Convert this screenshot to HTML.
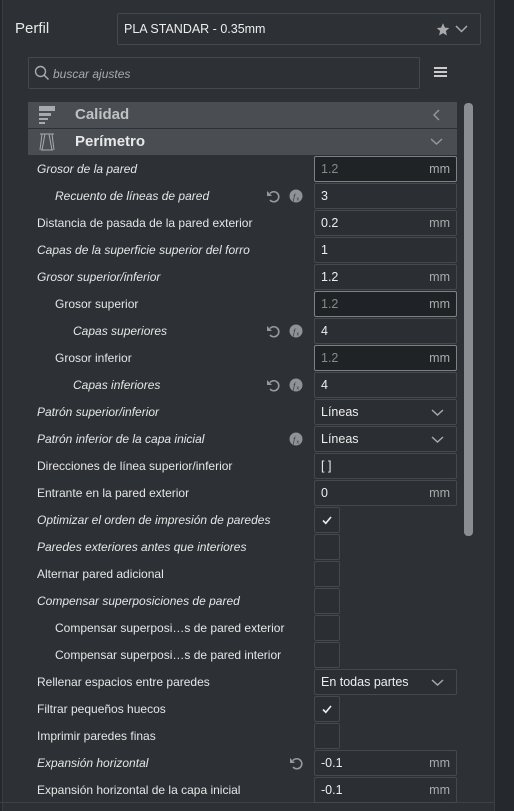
<!DOCTYPE html>
<html><head><meta charset="utf-8"><style>
*{margin:0;padding:0;box-sizing:border-box}
body{width:514px;height:811px;background:#2d3035;font-family:"Liberation Sans",sans-serif;color:#e4e4e4;position:relative;overflow:hidden}
.abs{position:absolute}
.lbl{position:absolute;font-size:12px;line-height:14px;white-space:nowrap;color:#e6e6e6}
.i{font-style:italic}
.f{position:absolute;left:314px;width:143px;height:26px;border:1px solid #45484d;border-radius:2px;background:#2b2e33;font-size:12.5px;line-height:24px;padding-left:6px;color:#eee}
.f.d{background:#202326;border-color:#7d8085;color:#888}
.f .u{position:absolute;right:6px;top:0;color:#aaa}
.cb{position:absolute;left:314px;width:26px;height:26px;border:1px solid #45484d;border-radius:2px;background:#2b2e33}
.ic{position:absolute}
</style></head><body>
<div class="abs" style="left:0;top:0;width:3px;height:811px;background:#25282c;border-right:1px solid #3a3d42"></div>
<div class="abs" style="left:494px;top:0;width:20px;height:811px;background:#25282c;border-left:1px solid #3a3d42"></div>
<div class="abs" style="left:0;top:802px;width:494px;height:1px;background:#3e4146"></div>
<div class="abs" style="left:15px;top:20px;font-size:15px;color:#e8e8e8">Perfil</div>
<div class="abs" style="left:117px;top:13px;width:364px;height:32px;border:1px solid #45484d;border-radius:2px;font-size:12.5px;line-height:30px;padding-left:6px;color:#eee">PLA STANDAR - 0.35mm
<svg class="ic" style="left:317px;top:8px" width="16" height="15" viewBox="0 0 24 24"><path d="M12 2l3 7 7 .6-5.4 4.7 1.7 7.2L12 17.7 5.7 21.5l1.7-7.2L2 9.6 9 9z" fill="#aaa"/></svg>
<svg class="ic" style="left:337px;top:10px" width="13" height="10" viewBox="0 0 13 10"><path d="M1 2l5.5 5.5L12 2" stroke="#aaa" stroke-width="1.5" fill="none"/></svg></div>
<div class="abs" style="left:28px;top:57px;width:392px;height:32px;border:1px solid #45484d;border-radius:2px"></div>
<svg class="abs" style="left:34px;top:65px" width="16" height="16" viewBox="0 0 16 16"><circle cx="6.5" cy="6.5" r="5" stroke="#aaa" stroke-width="1.4" fill="none"/><path d="M10 10l4.5 4.5" stroke="#aaa" stroke-width="1.5"/></svg>
<div class="abs i" style="left:53px;top:67px;font-size:12px;color:#aaa">buscar ajustes</div>
<div class="abs" style="left:434px;top:67px;width:13px;height:2px;background:#ccc;box-shadow:0 4px 0 #ccc,0 8px 0 #ccc"></div>
<div class="abs" style="left:464px;top:103px;width:9px;height:433px;background:#8a8d91;border-radius:4px"></div>
<div class="abs" style="left:28px;top:102px;width:429px;height:26px;background:#4a4e53"></div>
<div class="abs" style="left:28px;top:129px;width:429px;height:26px;background:#4a4e53"></div>
<div class="abs" style="left:39px;top:106px;width:16px;height:5px;background:#a8abae"></div>
<div class="abs" style="left:39px;top:113px;width:12px;height:3px;background:#a8abae"></div>
<div class="abs" style="left:39px;top:118px;width:9px;height:2px;background:#a8abae"></div>
<div class="abs" style="left:39px;top:122px;width:6px;height:2px;background:#a8abae"></div>
<svg class="abs" style="left:38px;top:133px" width="18" height="18" viewBox="0 0 18 18"><path d="M2 1h14M3 17h12M4 1l-2 16M14 1l2 16M7 1l-3 16M11 1l3 16" stroke="#a8abae" stroke-width="1" fill="none"/></svg>
<div class="abs" style="left:75px;top:106px;font-size:15px;font-weight:bold;color:#c0c1c3">Calidad</div>
<div class="abs" style="left:75px;top:133px;font-size:15px;font-weight:bold;color:#e8e8e8">Perímetro</div>
<svg class="abs" style="left:432px;top:109px" width="9" height="12" viewBox="0 0 9 12"><path d="M7 1L2 6l5 5" stroke="#999" stroke-width="1.4" fill="none"/></svg>
<svg class="abs" style="left:430px;top:137px" width="13" height="9" viewBox="0 0 13 9"><path d="M1 2l5.5 5L12 2" stroke="#999" stroke-width="1.4" fill="none"/></svg>

<div id="rows"></div>
<script>
var R=[
["Grosor de la pared",37,1,"fd","1.2"],
["Recuento de líneas de pared",55,1,"f","3","rf"],
["Distancia de pasada de la pared exterior",37,0,"fm","0.2"],
["Capas de la superficie superior del forro",37,1,"f","1"],
["Grosor superior/inferior",37,1,"fm","1.2"],
["Grosor superior",55,0,"fd","1.2"],
["Capas superiores",73,1,"f","4","rf"],
["Grosor inferior",55,0,"fd","1.2"],
["Capas inferiores",73,1,"f","4","rf"],
["Patrón superior/inferior",37,1,"dd","Líneas"],
["Patrón inferior de la capa inicial",37,1,"dd","Líneas","x"],
["Direcciones de línea superior/inferior",37,0,"f","[ ]"],
["Entrante en la pared exterior",37,0,"fm","0"],
["Optimizar el orden de impresión de paredes",37,1,"ck"],
["Paredes exteriores antes que interiores",37,1,"cb"],
["Alternar pared adicional",37,0,"cb"],
["Compensar superposiciones de pared",37,1,"cb"],
["Compensar superposi…s de pared exterior",55,0,"cb"],
["Compensar superposi…s de pared interior",55,0,"cb"],
["Rellenar espacios entre paredes",37,0,"dd","En todas partes"],
["Filtrar pequeños huecos",37,0,"ck"],
["Imprimir paredes finas",37,0,"cb"],
["Expansión horizontal",37,1,"fm","-0.1","r"],
["Expansión horizontal de la capa inicial",37,0,"fm","-0.1"]];
var h="";
var reset='<svg width="14" height="14" viewBox="0 0 14 14"><path d="M4 4.5A5 5 0 1 1 4 11" stroke="#999" stroke-width="1.6" fill="none"/><path d="M1 2v5h5z" fill="#999"/></svg>';
var fx='<svg width="14" height="14" viewBox="0 0 14 14"><circle cx="7" cy="7" r="6.5" fill="#8f9296"/><text x="4" y="10.5" font-size="8" font-style="italic" font-family="Liberation Serif" fill="#2d3035">f</text><text x="7.5" y="11.5" font-size="5" fill="#2d3035" font-family="Liberation Sans">x</text></svg>';
var chk='<svg width="24" height="24" viewBox="0 0 24 24" style="position:absolute;left:0;top:0"><path d="M8 12.5l2.8 2.8L16 9" stroke="#eee" stroke-width="1.6" fill="none"/></svg>';
R.forEach(function(r,k){var c=169+27*k,t=c-13;
h+='<div class="lbl'+(r[2]?' i':'')+'" style="left:'+r[1]+'px;top:'+(c-7)+'px">'+r[0]+'</div>';
var ty=r[3];
if(ty=="fd")h+='<div class="f d" style="top:'+t+'px">'+r[4]+'<span class="u">mm</span></div>';
else if(ty=="fm")h+='<div class="f" style="top:'+t+'px">'+r[4]+'<span class="u">mm</span></div>';
else if(ty=="f")h+='<div class="f" style="top:'+t+'px">'+r[4]+'</div>';
else if(ty=="dd")h+='<div class="f" style="top:'+t+'px">'+r[4]+'<svg style="position:absolute;right:12px;top:8px" width="13" height="9" viewBox="0 0 13 9"><path d="M1 2l5.5 5L12 2" stroke="#aaa" stroke-width="1.4" fill="none"/></svg></div>';
else if(ty=="ck")h+='<div class="cb" style="top:'+t+'px">'+chk+'</div>';
else h+='<div class="cb" style="top:'+t+'px"></div>';
var ic=r[5]||"";
if(ic.indexOf("r")>=0)h+='<div class="ic" style="left:'+(ic=="r"?289:266)+'px;top:'+(c-7)+'px">'+reset+'</div>';
if(ic.indexOf("f")>=0||ic=="x")h+='<div class="ic" style="left:289px;top:'+(c-7)+'px">'+fx+'</div>';
});
document.getElementById("rows").innerHTML=h;
</script>
</body></html>
